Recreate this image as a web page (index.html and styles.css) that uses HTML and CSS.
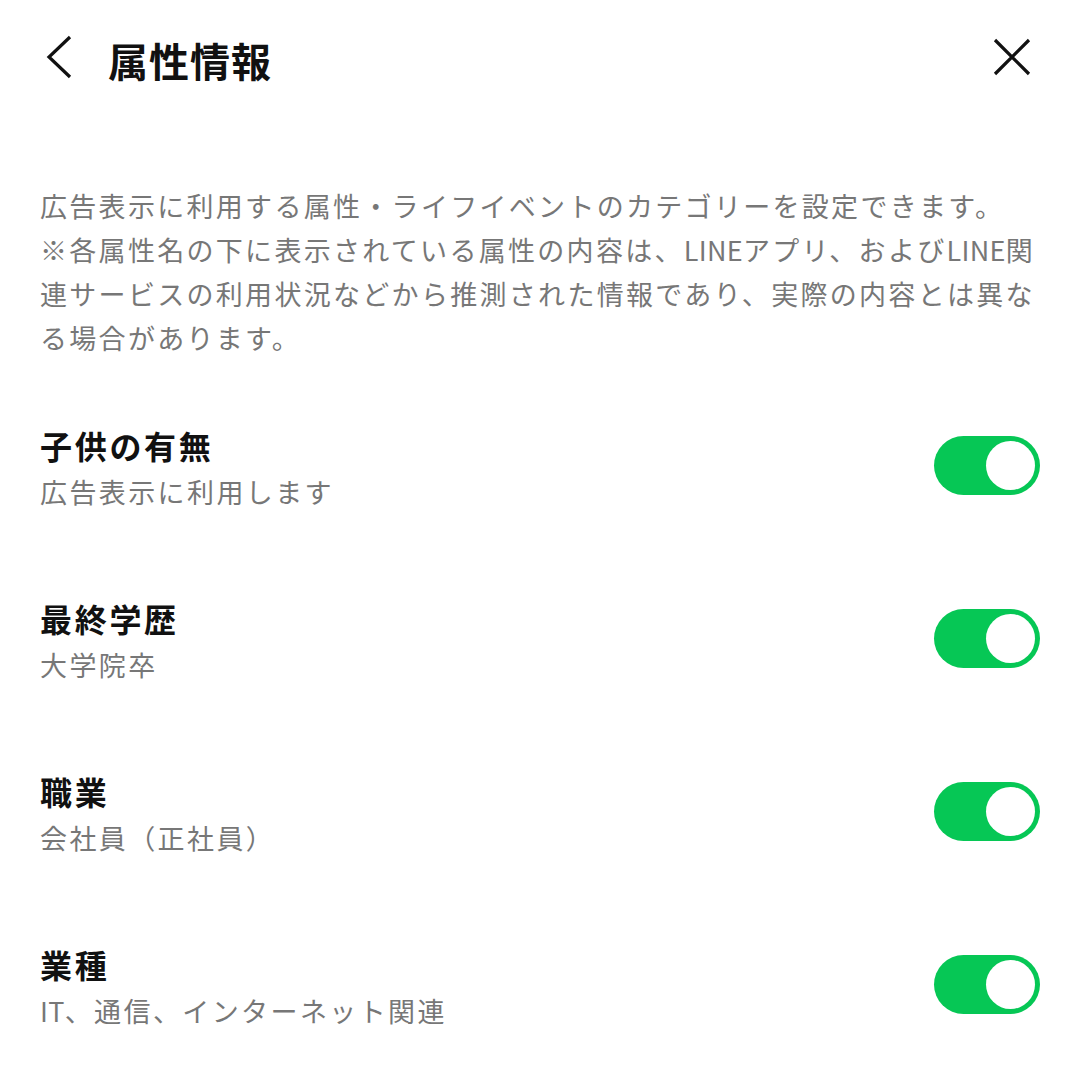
FILE: index.html
```html
<!DOCTYPE html>
<html lang="ja">
<head>
  <meta charset="UTF-8" />
  <meta name="viewport" content="width=device-width, initial-scale=1.0" />
  <title>属性情報</title>
  <link rel="stylesheet" href="styles.css">
</head>
<body>
  <div class="header">
    <button class="icon-btn back-btn" aria-label="戻る">
      <svg width="26" height="44" viewBox="0 0 26 44">
        <path d="M24 2 L3 22 L24 42" fill="none" stroke="#111" stroke-width="3.2" />
      </svg>
    </button>
    <h1 class="title">属性情報</h1>
    <button class="icon-btn close-btn" aria-label="閉じる">
      <svg width="38" height="38" viewBox="0 0 38 38">
        <path d="M2 2 L36 36 M36 2 L2 36" fill="none" stroke="#111" stroke-width="3.2" />
      </svg>
    </button>
  </div>

  <p class="description">
    広告表示に利用する属性・ライフイベントのカテゴリーを設定できます。<br>
    ※各属性名の下に表示されている属性の内容は、<span class="en">LINE</span>アプリ、および<span class="en">LINE</span>関連サービスの利用状況などから推測された情報であり、実際の内容とは異なる場合があります。
  </p>

  <div class="list">
    <div class="row">
      <div class="row-text">
        <div class="row-title">子供の有無</div>
        <div class="row-sub">広告表示に利用します</div>
      </div>
      <span class="toggle on"></span>
    </div>
    <div class="row">
      <div class="row-text">
        <div class="row-title">最終学歴</div>
        <div class="row-sub">大学院卒</div>
      </div>
      <span class="toggle on"></span>
    </div>
    <div class="row">
      <div class="row-text">
        <div class="row-title">職業</div>
        <div class="row-sub">会社員（正社員）</div>
      </div>
      <span class="toggle on"></span>
    </div>
    <div class="row">
      <div class="row-text">
        <div class="row-title">業種</div>
        <div class="row-sub"><span class="en">IT</span>、通信、インターネット関連</div>
      </div>
      <span class="toggle on"></span>
    </div>
  </div>
</body>
</html>
```

FILE: styles.css
```css
body {
  margin: 0;
  background: #fff;
  font-family: "Noto Sans CJK JP", "Noto Sans", sans-serif;
  color: #111;
}

.header {
  display: flex;
  align-items: center;
  height: 120px;
  padding: 0 49px 0 46px;
}

.icon-btn {
  background: none;
  border: none;
  padding: 0;
  display: flex;
  cursor: pointer;
  margin-bottom: 6px;
}

.title {
  flex: 1;
  margin: 0 0 0 36px;
  font-size: 40px;
  font-weight: 700;
  letter-spacing: 1px;
}

.description {
  margin: 64px 0 0;
  padding: 0 40px;
  font-size: 27px;
  line-height: 44px;
  letter-spacing: 2.3px;
  color: #777;
}

.en {
  letter-spacing: 0.3px;
}

.list {
  margin-top: 65px;
  padding: 0 40px;
  display: flex;
  flex-direction: column;
  gap: 84px;
}

.row {
  display: flex;
  align-items: center;
  justify-content: space-between;
}

.row-title {
  font-size: 32px;
  font-weight: 700;
  line-height: 40px;
  letter-spacing: 2.7px;
}

.row-sub {
  margin-top: 5px;
  font-size: 27px;
  line-height: 44px;
  letter-spacing: 2.4px;
  color: #777;
}

.toggle {
  position: relative;
  width: 106px;
  height: 59px;
  border-radius: 30px;
  background: #06c755;
  margin-bottom: 8px;
}

.toggle::after {
  content: "";
  position: absolute;
  top: 5px;
  right: 5px;
  width: 49px;
  height: 49px;
  border-radius: 50%;
  background: #fff;
}
```
